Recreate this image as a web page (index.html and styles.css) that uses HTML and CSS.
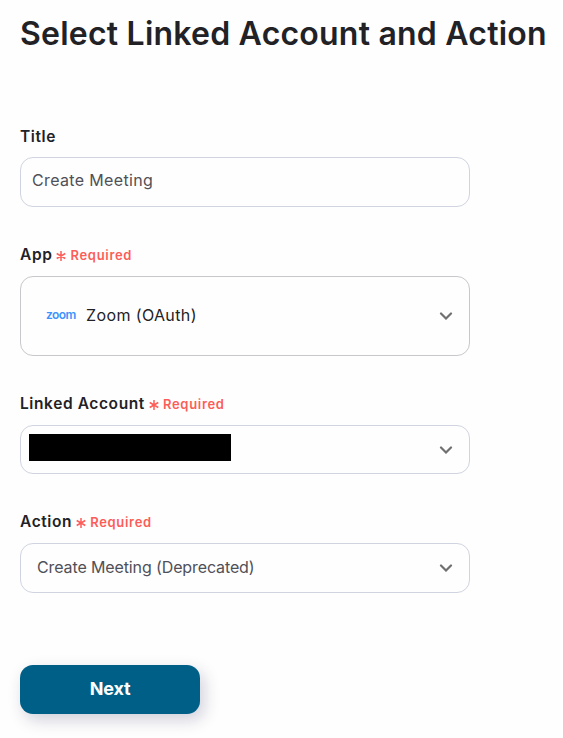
FILE: index.html
```html
<!DOCTYPE html>
<html lang="en">
<head>
    <meta charset="UTF-8">
    <meta name="viewport" content="width=device-width, initial-scale=1.0">
    <title>Select Linked Account and Action</title>
    <link rel="stylesheet" href="styles.css">
</head>
<body>

    <h1>Select Linked Account and Action</h1>

    <form class="form">
        <div class="field">
            <div class="label">Title</div>
            <div class="box title-box">Create Meeting</div>
        </div>

        <div class="field">
            <div class="label">
                <span class="name">App</span>
                <span class="required"><svg class="star" viewBox="0 0 10 10"><path d="M5 0v10M.7 2.5l8.6 5M9.3 2.5l-8.6 5"/></svg>Required</span>
            </div>
            <div class="box app-box">
                <span class="zoom-logo">zoom</span>
                <span class="app-name">Zoom (OAuth)</span>
                <svg class="chevron" viewBox="0 0 14 8"><path d="M2 1.5l5 5 5-5"/></svg>
            </div>
        </div>

        <div class="field">
            <div class="label">
                <span class="name">Linked Account</span>
                <span class="required"><svg class="star" viewBox="0 0 10 10"><path d="M5 0v10M.7 2.5l8.6 5M9.3 2.5l-8.6 5"/></svg>Required</span>
            </div>
            <div class="box account-box">
                <span class="redacted"></span>
                <svg class="chevron" viewBox="0 0 14 8"><path d="M2 1.5l5 5 5-5"/></svg>
            </div>
        </div>

        <div class="field">
            <div class="label">
                <span class="name">Action</span>
                <span class="required"><svg class="star" viewBox="0 0 10 10"><path d="M5 0v10M.7 2.5l8.6 5M9.3 2.5l-8.6 5"/></svg>Required</span>
            </div>
            <div class="box action-box">
                <span class="action-name">Create Meeting (Deprecated)</span>
                <svg class="chevron" viewBox="0 0 14 8"><path d="M2 1.5l5 5 5-5"/></svg>
            </div>
        </div>

        <button type="button" class="next">Next</button>
    </form>

</body>
</html>
```
FILE: styles.css
```css
body {
    font-family: Inter, sans-serif;
    background-color: #fefefe;
    color: #222226;
    box-sizing: border-box;
    min-height: 100vh;
    margin: 0;
    padding: 14px 0 0 20px;
}

h1 {
    font-size: 32px;
    font-weight: 600;
    line-height: 40px;
    letter-spacing: 0.22px;
    white-space: nowrap;
    margin: 0 0 72px;
}

.form {
    width: 450px;
}

.label {
    display: flex;
    align-items: center;
    gap: 4px;
    height: 20px;
    margin-bottom: 11px;
    font-size: 15.5px;
    font-weight: 600;
    letter-spacing: 0.6px;
}

.name {
    margin-bottom: 2px;
}

.required {
    display: flex;
    align-items: center;
    gap: 4px;
    color: #fd5d58;
    font-size: 13px;
    font-weight: 600;
    letter-spacing: 0.7px;
}

.star {
    width: 10px;
    height: 10px;
    margin-top: 2px;
    fill: none;
    stroke: #fd5d58;
    stroke-width: 1.5;
}

.box {
    display: flex;
    align-items: center;
    box-sizing: border-box;
    height: 50px;
    border: 1px solid #d0d4e0;
    border-radius: 13px;
    color: #505058;
    font-size: 16px;
    margin-bottom: 38px;
}

.title-box {
    padding: 0 11px 4px;
    letter-spacing: 0.35px;
}

.app-box {
    height: 80px;
    padding: 0 16px 0 25px;
    color: #222226;
    border-color: #c8c8cc;
}

.zoom-logo {
    width: 40px;
    color: #3d93ff;
    font-size: 12px;
    font-weight: 600;
    letter-spacing: -0.6px;
    line-height: 16px;
    margin-bottom: 2px;
}

.app-name {
    margin-bottom: 2px;
    letter-spacing: 0.38px;
}

.account-box {
    height: 49px;
    padding: 0 16px 0 8px;
}

.redacted {
    width: 202px;
    height: 27px;
    margin-bottom: 4px;
    background-color: #000;
}

.action-box {
    padding: 0 16px;
}

.action-name {
    margin-bottom: 2px;
    letter-spacing: -0.12px;
}

.chevron {
    width: 14px;
    height: 8px;
    margin-left: auto;
    fill: none;
    stroke: #707070;
    stroke-width: 2.2;
    stroke-linecap: round;
}

.next {
    display: block;
    width: 180px;
    height: 49px;
    margin-top: 72px;
    padding: 0 0 3px;
    border: none;
    border-radius: 13px;
    background-color: #005f87;
    box-shadow: 4px 6px 16px rgba(40, 40, 90, 0.22);
    color: #fff;
    font-family: inherit;
    font-size: 18px;
    font-weight: 700;
    letter-spacing: -0.2px;
}
```
